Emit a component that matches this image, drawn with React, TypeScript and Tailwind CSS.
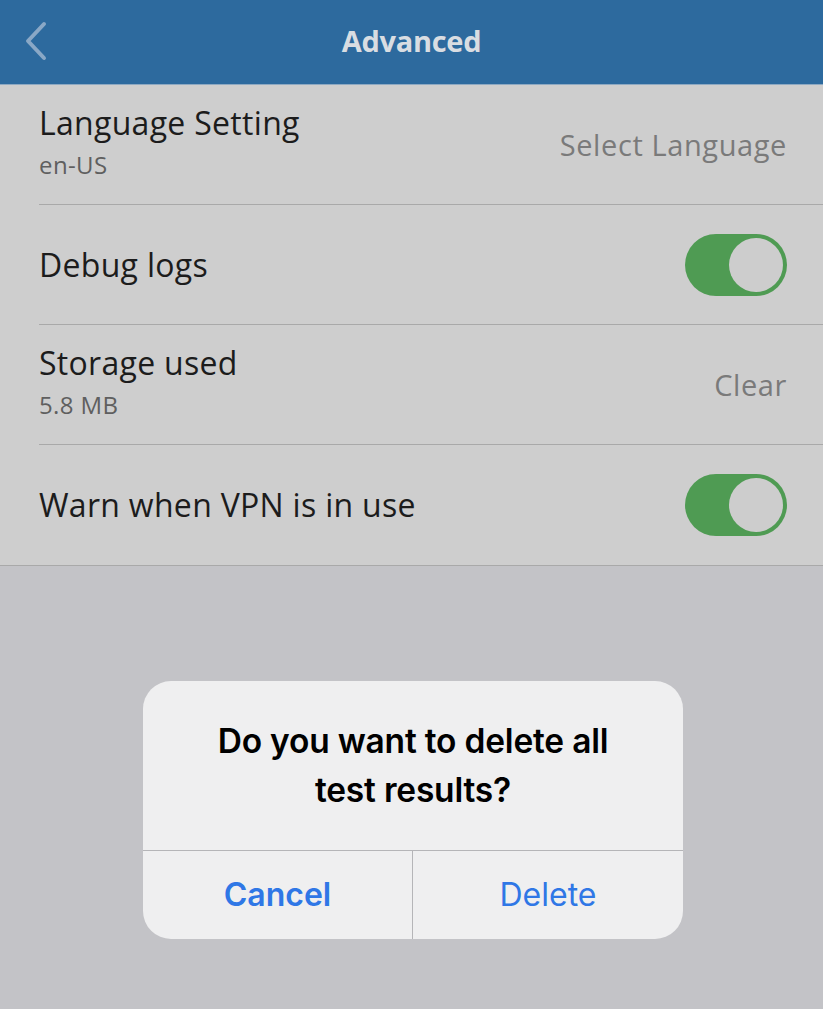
import React from 'react';

const rowText = { fontFamily: '"Open Sans", "Noto Sans", sans-serif' };
const sysText = { fontFamily: 'Inter, "Liberation Sans", sans-serif' };

function Toggle() {
  return (
    <div className="w-[102px] h-[62px] rounded-full bg-[#4f9b53] p-[4px] flex justify-end">
      <div className="w-[54px] h-[54px] rounded-full bg-[#cdcdcd]" />
    </div>
  );
}

function Row({ title, sub, right, last }: { title: string; sub?: string; right: React.ReactNode; last?: boolean }) {
  return (
    <div className="pl-[39px]">
      <div className={`h-[120px] flex items-center justify-between pr-[36px] ${last ? '' : 'border-b border-[#a9a9a9]'}`}>
        <div className={`flex flex-col ${sub ? 'pb-[7px]' : ''}`}>
          <span className="text-[32px] leading-[40px] text-[#1c1c1c] tracking-[0.3px]">{title}</span>
          {sub && <span className="text-[24px] leading-[30px] mt-[7px] text-[#5f5f5f] tracking-[0.4px]">{sub}</span>}
        </div>
        {right}
      </div>
    </div>
  );
}

export default function App() {
  return (
    <div className="w-[823px] h-[1009px] bg-[#c3c3c7] flex flex-col relative overflow-hidden" style={rowText}>
      <div className="h-[85px] bg-[#2d6a9e] border-b border-[#8ea9c2] flex items-center justify-center relative">
        <svg className="absolute left-[22px] top-[21px]" width="28" height="40" viewBox="0 0 28 40" fill="none">
          <path d="M22 3 L6 20 L22 37" stroke="#8aa8c6" strokeWidth="4" strokeLinecap="round" strokeLinejoin="round" />
        </svg>
        <span className="text-[29px] font-bold text-[#d9dde2] tracking-[-0.3px] -mt-[2px]">Advanced</span>
      </div>
      <div className="bg-[#cecece] border-b border-[#a9a9a9]">
        <Row
          title="Language Setting"
          sub="en-US"
          right={<span className="text-[29px] text-[#7a7a7a] tracking-[0.6px]">Select Language</span>}
        />
        <Row title="Debug logs" right={<Toggle />} />
        <Row
          title="Storage used"
          sub="5.8 MB"
          right={<span className="text-[29px] text-[#7a7a7a] tracking-[0.6px]">Clear</span>}
        />
        <Row title="Warn when VPN is in use" right={<Toggle />} last />
      </div>

      <div className="absolute left-[143px] top-[681px] w-[540px] h-[258px] rounded-[28px] bg-[#efeff0] flex flex-col overflow-hidden" style={sysText}>
        <div className="h-[170px] flex items-center justify-center text-center px-6 border-b border-[#b5b5b8]">
          <p className="text-[33.5px] leading-[49px] font-semibold text-black tracking-[-0.2px] pt-[1px]">
            Do you want to delete all
            <br />
            test results?
          </p>
        </div>
        <div className="flex-1 flex">
          <div className="w-[270px] flex items-center justify-center border-r border-[#b5b5b8]">
            <span className="text-[32px] font-semibold text-[#2f77e6]">Cancel</span>
          </div>
          <div className="flex-1 flex items-center justify-center">
            <span className="text-[32px] text-[#2f77e6]">Delete</span>
          </div>
        </div>
      </div>
    </div>
  );
}
